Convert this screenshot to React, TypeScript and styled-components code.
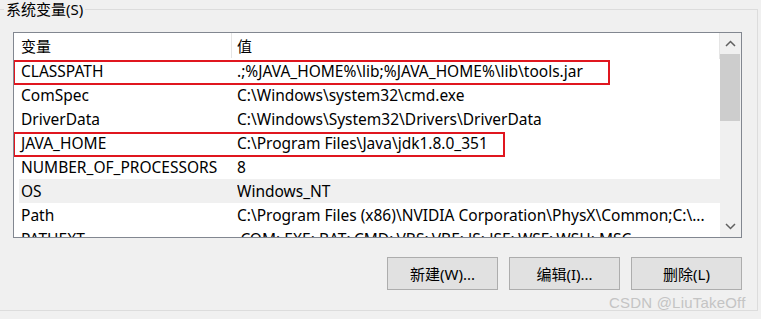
import React from "react";
import styled, { createGlobalStyle } from "styled-components";

const Global = createGlobalStyle`
  html, body { margin: 0; padding: 0; background: #f0f0f0; }
  body { font-family: "Noto Sans", "Noto Sans CJK SC", sans-serif; }
`;

const FONT = `"Noto Sans", "Noto Sans CJK SC", sans-serif`;

const Page = styled.div`
  position: relative;
  width: 761px;
  height: 319px;
  overflow: hidden;
  background: #f0f0f0;
  font-family: ${FONT};
  font-size: 15px;
  color: #000;
`;

const Group = styled.fieldset`
  box-sizing: border-box;
  margin: 0 0 0 -10px;
  width: 768px;
  padding: 13px 15px 20px 22px;
  border: 1px solid #dcdcdc;
  display: flex;
  flex-direction: column;
`;

const Legend = styled.legend`
  margin-left: -9px;
  padding: 0 2px;
  font-size: 15px;
  line-height: 19px;
  color: #000;
`;

const ListBox = styled.div`
  height: 206px;
  box-sizing: border-box;
  border: 1px solid #828790;
  background: #fff;
  display: flex;
`;

const ListArea = styled.div`
  flex: 1;
  display: flex;
  flex-direction: column;
  overflow: hidden;
`;

const HeaderRow = styled.div`
  height: 26px;
  flex: none;
  display: grid;
  grid-template-columns: 218px 1fr;
  border-right: 1px solid #e5e5e5;
`;

const HeaderCell = styled.div<{ $first?: boolean }>`
  display: flex;
  align-items: center;
  padding-left: ${(p) => (p.$first ? "7px" : "5px")};
  border-right: ${(p) => (p.$first ? "1px solid #e5e5e5" : "none")};
  box-sizing: border-box;
  height: 25px;
`;

const Row = styled.div<{ $hl?: boolean }>`
  position: relative;
  flex: none;
  height: 24px;
  margin-left: 5px;
  display: grid;
  grid-template-columns: 218px 1fr;
  align-items: center;
  font-size: 15.5px;
  background: ${(p) => (p.$hl ? "#f0f0f0" : "transparent")};
  white-space: nowrap;
`;

const NameCell = styled.div`
  padding-left: 2px;
`;

const ValueCell = styled.div`
  overflow: hidden;
`;

const Mark = styled.div<{ $w: number }>`
  position: absolute;
  left: -6px;
  top: 1px;
  width: ${(p) => p.$w}px;
  height: 25px;
  box-sizing: border-box;
  border: 2px solid #e0161f;
  pointer-events: none;
`;

const ScrollBar = styled.div`
  width: 21px;
  flex: none;
  background: #f0f0f0;
  display: flex;
  flex-direction: column;
`;

const ArrowBtn = styled.div`
  height: 21px;
  flex: none;
  display: flex;
  align-items: center;
  justify-content: center;
  color: #606060;
`;

const Track = styled.div`
  flex: 1;
  padding-right: 1px;
`;

const Thumb = styled.div`
  height: 67px;
  background: #cdcdcd;
`;

const ButtonRow = styled.div`
  margin-top: 19px;
  display: flex;
  justify-content: flex-end;
  gap: 11px;
`;

const Button = styled.button`
  width: 111px;
  height: 33px;
  box-sizing: border-box;
  border: 1px solid #adadad;
  background: #e1e1e1;
  font-family: ${FONT};
  font-size: 15px;
  color: #000;
  padding: 0;
  display: flex;
  align-items: center;
  justify-content: center;
`;

const Watermark = styled.div`
  position: absolute;
  left: 609px;
  top: 294px;
  font-family: "Liberation Sans", Arial, sans-serif;
  font-size: 15px;
  color: #c4c4c4;
  letter-spacing: 0.2px;
`;

const Chevron = ({ up }: { up?: boolean }) => (
  <svg width="11" height="7" viewBox="0 0 11 7">
    <path
      d={up ? "M1 6 L5.5 1.5 L10 6" : "M1 1 L5.5 5.5 L10 1"}
      fill="none"
      stroke="currentColor"
      strokeWidth="1.5"
    />
  </svg>
);

type Item = { name: string; value: string; mark?: number; hl?: boolean };

const items: Item[] = [
  { name: "CLASSPATH", value: ".;%JAVA_HOME%\\lib;%JAVA_HOME%\\lib\\tools.jar", mark: 597 },
  { name: "ComSpec", value: "C:\\Windows\\system32\\cmd.exe" },
  { name: "DriverData", value: "C:\\Windows\\System32\\Drivers\\DriverData" },
  { name: "JAVA_HOME", value: "C:\\Program Files\\Java\\jdk1.8.0_351", mark: 492 },
  { name: "NUMBER_OF_PROCESSORS", value: "8" },
  { name: "OS", value: "Windows_NT", hl: true },
  { name: "Path", value: "C:\\Program Files (x86)\\NVIDIA Corporation\\PhysX\\Common;C:\\..." },
  { name: "PATHEXT", value: ".COM;.EXE;.BAT;.CMD;.VBS;.VBE;.JS;.JSE;.WSF;.WSH;.MSC" },
];

export default function App() {
  return (
    <Page>
      <Global />
      <Group>
        <Legend>系统变量(S)</Legend>
        <ListBox>
          <ListArea>
            <HeaderRow>
              <HeaderCell $first>变量</HeaderCell>
              <HeaderCell>值</HeaderCell>
            </HeaderRow>
            {items.map((it) => (
              <Row key={it.name} $hl={it.hl}>
                <NameCell>{it.name}</NameCell>
                <ValueCell>{it.value}</ValueCell>
                {it.mark ? <Mark $w={it.mark} /> : null}
              </Row>
            ))}
          </ListArea>
          <ScrollBar>
            <ArrowBtn>
              <Chevron up />
            </ArrowBtn>
            <Track>
              <Thumb />
            </Track>
            <ArrowBtn>
              <Chevron />
            </ArrowBtn>
          </ScrollBar>
        </ListBox>
        <ButtonRow>
          <Button>新建(W)...</Button>
          <Button>编辑(I)...</Button>
          <Button>删除(L)</Button>
        </ButtonRow>
      </Group>
      <Watermark>CSDN @LiuTakeOff</Watermark>
    </Page>
  );
}
